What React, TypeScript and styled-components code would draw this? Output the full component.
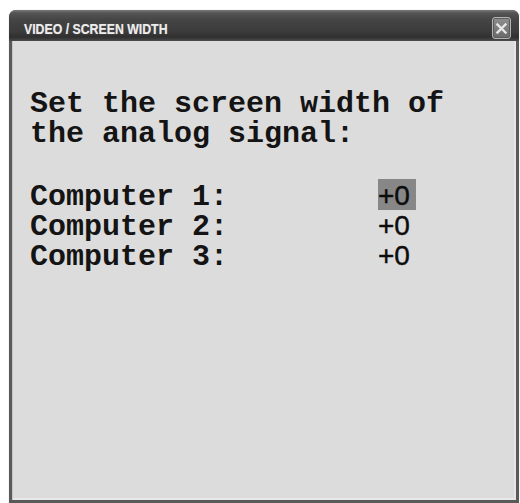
import React from "react";
import styled, { createGlobalStyle } from "styled-components";

const Global = createGlobalStyle`
  html, body {
    margin: 0;
    padding: 0;
    background: #ffffff;
  }
  body {
    width: 520px;
    height: 503px;
    overflow: hidden;
  }
`;

const Page = styled.div`
  padding: 10px 1px 0 9px;
  height: 503px;
  box-sizing: border-box;
`;

const Window = styled.div`
  display: flex;
  flex-direction: column;
  height: 493px;
  box-sizing: border-box;
  border-radius: 7px 7px 0 0;
  overflow: hidden;
  background: #5a5a5a;
  box-shadow: 0 0 1px rgba(0, 0, 0, 0.35);
`;

const TitleBar = styled.div`
  display: flex;
  align-items: center;
  justify-content: space-between;
  height: 31px;
  box-sizing: border-box;
  padding: 5px 8px 0 15px;
  background: linear-gradient(
    to bottom,
    #7a7a7a 0px,
    #545454 3px,
    #444444 10px,
    #3b3b3b 22px,
    #2f2f2f 27px,
    #4a4a4a 31px
  );
`;

const Title = styled.span`
  display: inline-block;
  font-family: "Liberation Sans", Arial, sans-serif;
  font-weight: 700;
  font-size: 15px;
  line-height: 1;
  color: #ececec;
  transform: scaleX(0.82);
  transform-origin: left center;
  white-space: nowrap;
  text-shadow: 0 0 1px rgba(255, 255, 255, 0.4);
`;

const CloseButton = styled.div`
  align-self: flex-start;
  margin-top: 2px;
  width: 19px;
  height: 22px;
  box-sizing: border-box;
  display: flex;
  align-items: center;
  justify-content: center;
  border: 1px solid #b4b4b4;
  border-radius: 3px;
  background: linear-gradient(to bottom, #8e8e8e, #6a6a6a);
  box-shadow: inset 0 0 0 1px #5c5c5c;
`;

const Body = styled.div`
  flex: 1;
  margin: 0 3px 3px 3px;
  background: #dcdcdc;
  box-shadow: inset 1px 0 0 #c6c6c6, inset -2px 0 0 #e6e6e6, inset 0 -2px 0 #e8e8e8;
  padding: 48px 0 0 18px;
  color: #141414;
`;

const Prompt = styled.div`
  font-family: "Liberation Mono", "Courier New", monospace;
  font-weight: 700;
  font-size: 30px;
  line-height: 30px;
  white-space: pre;
`;

const List = styled.div`
  margin-top: 33px;
  display: flex;
  flex-direction: column;
`;

const Row = styled.div`
  display: flex;
  align-items: flex-start;
  height: 30px;
`;

const Label = styled.span`
  width: 348px;
  font-family: "Liberation Mono", "Courier New", monospace;
  font-weight: 700;
  font-size: 30px;
  line-height: 30px;
  white-space: pre;
`;

/* The highlight sits 3px higher than the row so the text shares the label's baseline. */
const Value = styled.span<{ $selected?: boolean }>`
  display: block;
  width: 38px;
  height: 31px;
  margin-top: -3px;
  padding-top: 2px;
  box-sizing: border-box;
  font-family: "Liberation Sans", Arial, sans-serif;
  font-size: 28px;
  line-height: 29px;
  color: #0c0c0c;
  -webkit-text-stroke: 0.4px #0c0c0c;
  background: ${(p) => (p.$selected ? "#878787" : "transparent")};
`;

const rows = [
  { label: "Computer 1:", value: "+0" },
  { label: "Computer 2:", value: "+0" },
  { label: "Computer 3:", value: "+0" },
];

export default function App() {
  return (
    <>
      <Global />
      <Page>
        <Window>
          <TitleBar>
            <Title>VIDEO / SCREEN WIDTH</Title>
            <CloseButton>
              <svg width="11" height="11" viewBox="0 0 11 11">
                <path
                  d="M1.5 1.5 L9.5 9.5 M9.5 1.5 L1.5 9.5"
                  stroke="#e6e6e6"
                  strokeWidth="2.4"
                  strokeLinecap="square"
                />
              </svg>
            </CloseButton>
          </TitleBar>
          <Body>
            <Prompt>{"Set the screen width of\nthe analog signal:"}</Prompt>
            <List>
              {rows.map((r, i) => (
                <Row key={r.label}>
                  <Label>{r.label}</Label>
                  <Value $selected={i === 0}>{r.value}</Value>
                </Row>
              ))}
            </List>
          </Body>
        </Window>
      </Page>
    </>
  );
}
